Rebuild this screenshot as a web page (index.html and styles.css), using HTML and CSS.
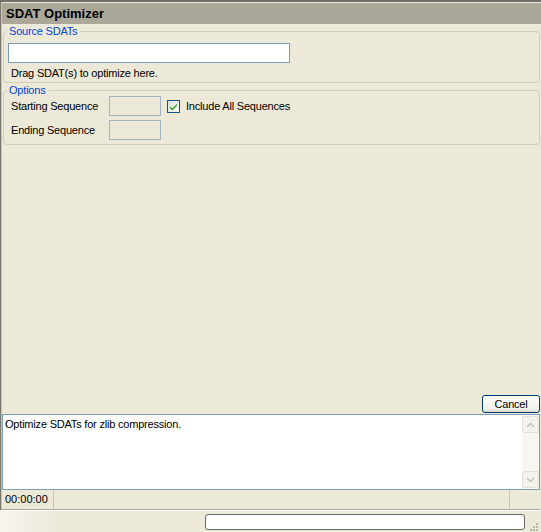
FILE: index.html
```html
<!DOCTYPE html>
<html>
<head>
<meta charset="utf-8">
<link rel="stylesheet" href="styles.css">
</head>
<body>
<div class="window">
  <div class="main">
    <div class="titlebar">SDAT Optimizer</div>
    <div class="content">
      <fieldset class="group group-source">
        <legend>Source SDATs</legend>
        <div class="textbox"></div>
        <div class="hint">Drag SDAT(s) to optimize here.</div>
      </fieldset>
      <fieldset class="group group-options">
        <legend>Options</legend>
        <div class="row">
          <span class="label">Starting Sequence</span>
          <span class="seqbox"></span>
          <span class="checkbox">
            <svg width="11" height="11" viewBox="0 0 11 11"><path d="M2 5.2 L4.3 7.6 L9 2.8 L9 4.6 L4.3 9.4 L2 7 Z" fill="#21a121"/></svg>
          </span>
          <span class="checklabel">Include All Sequences</span>
        </div>
        <div class="row">
          <span class="label">Ending Sequence</span>
          <span class="seqbox"></span>
        </div>
      </fieldset>
      <div class="spacer"></div>
      <div class="buttonrow"><button class="btn">Cancel</button></div>
      <div class="log">
        <div class="logtext">Optimize SDATs for zlib compression.</div>
        <div class="scrollbar">
          <div class="sbtn">
            <svg width="9" height="6" viewBox="0 0 9 6"><path d="M1 5 L4.5 1.5 L8 5" fill="none" stroke="#c4c3b8" stroke-width="1.4"/></svg>
          </div>
          <div class="strack"></div>
          <div class="sbtn">
            <svg width="9" height="6" viewBox="0 0 9 6"><path d="M1 1 L4.5 4.5 L8 1" fill="none" stroke="#c4c3b8" stroke-width="1.4"/></svg>
          </div>
        </div>
      </div>
      <div class="status">
        <div class="spanel time">00:00:00</div>
        <div class="spanel fill"></div>
        <div class="spanel last"></div>
      </div>
    </div>
  </div>
  <div class="bottombar">
    <div class="progress"></div>
    <div class="grip">
      <svg width="11" height="11" viewBox="0 0 11 11">
        <g fill="#b8b5a6">
          <rect x="8" y="2" width="2" height="2"/>
          <rect x="5" y="5" width="2" height="2"/><rect x="8" y="5" width="2" height="2"/>
          <rect x="2" y="8" width="2" height="2"/><rect x="5" y="8" width="2" height="2"/><rect x="8" y="8" width="2" height="2"/>
        </g>
      </svg>
    </div>
  </div>
</div>
</body>
</html>
```
FILE: styles.css
```css
html, body {
  margin: 0;
  padding: 0;
}
body {
  width: 541px;
  height: 532px;
  overflow: hidden;
  background: #ece9d8;
  font-family: "Liberation Sans", Arial, sans-serif;
  font-size: 11px;
  letter-spacing: -0.2px;
  color: #000;
}
.window {
  width: 541px;
  height: 532px;
  display: flex;
  flex-direction: column;
  border-top: 2px solid #6f6f6a;
  box-sizing: border-box;
}
.main {
  flex: 1;
  display: flex;
  flex-direction: column;
  border-left: 1px solid #7a786e;
  box-shadow: inset 1px 0 0 #c9c6b6;
  min-height: 0;
}
.titlebar {
  margin-top: 1px;
  height: 21px;
  background: #aca899;
  font-size: 13px;
  font-weight: bold;
  letter-spacing: 0;
  line-height: 21px;
  padding-left: 4px;
  margin-left: 1px;
}
.content {
  flex: 1;
  display: flex;
  flex-direction: column;
  padding: 0 1px 0 1px;
  min-height: 0;
}
.group {
  margin: 1px 0 0 1px;
  border: 1px solid #d0cebf;
  border-radius: 4px;
  padding: 0 4px 2px 4px;
  min-width: 0;
}
.group legend {
  color: #0046d5;
  padding: 0 3px 0 2px;
  margin-left: -1px;
  line-height: 12px;
  height: 12px;
}
.group-source { padding-top: 6px; }
.textbox {
  width: 280px;
  height: 18px;
  background: #fff;
  border: 1px solid #7f9db9;
}
.hint {
  margin-top: 4px;
  padding-left: 3px;
  line-height: 13px;
}
.group-options {
  margin-top: 1px;
  padding-top: 0;
  padding-bottom: 4px;
  display: flex;
  flex-direction: column;
  gap: 4px;
}
.row {
  display: flex;
  align-items: center;
  height: 20px;
}
.label {
  width: 98px;
  padding-left: 3px;
}
.seqbox {
  width: 50px;
  height: 18px;
  border: 1px solid #a5b2c2;
  background: #ece9d8;
}
.checkbox {
  margin-left: 6px;
  width: 11px;
  height: 11px;
  border: 1px solid #1c5180;
  background: linear-gradient(135deg, #dcdcd7, #fff);
  display: flex;
}
.checklabel {
  margin-left: 6px;
}
.spacer { flex: 1; }
.buttonrow {
  display: flex;
  justify-content: flex-end;
  height: 19px;
}
.btn {
  width: 58px;
  height: 18px;
  margin: 0;
  padding: 0;
  border: 1px solid #003c74;
  border-radius: 3px;
  background: linear-gradient(#fdfdfb, #f2f1ea 80%, #d8d6cb);
  font-family: "Liberation Sans", Arial, sans-serif;
  font-size: 11px;
  letter-spacing: -0.2px;
  color: #000;
  line-height: 16px;
}
.log {
  height: 76px;
  background: #fff;
  border: 1px solid #7f9db9;
  display: flex;
  box-sizing: border-box;
  margin-right: 0;
}
.logtext {
  flex: 1;
  padding: 3px 0 0 2px;
  line-height: 13px;
}
.scrollbar {
  width: 17px;
  display: flex;
  flex-direction: column;
  background: #f7f6f1;
  padding: 1px 0;
}
.sbtn {
  height: 15px;
  width: 15px;
  border: 1px solid #e4e2d8;
  border-radius: 2px;
  background: #f3f2ec;
  display: flex;
  align-items: center;
  justify-content: center;
}
.strack { flex: 1; }
.status {
  height: 20px;
  display: flex;
  border-bottom: 1px solid #aca899;
  box-sizing: border-box;
}
.spanel {
  line-height: 18px;
  border-right: 1px solid #c8c5b6;
}
.time {
  width: 48px;
  padding-left: 3px;
  letter-spacing: 0;
  font-size: 11px;
}
.fill { flex: 1; }
.last { width: 30px; border-right: 0; }
.bottombar {
  height: 22px;
  display: flex;
  align-items: center;
  justify-content: flex-end;
  background: linear-gradient(90deg, #f6f5ef 0, #ece9d8 60px, #ece9d8 100%);
  border-top: 1px solid #fff;
  box-sizing: border-box;
}
.progress {
  width: 318px;
  height: 14px;
  background: #fff;
  border: 1px solid #686868;
  border-radius: 3px;
}
.grip {
  width: 16px;
  height: 20px;
  display: flex;
  align-items: flex-end;
  justify-content: center;
}
```
